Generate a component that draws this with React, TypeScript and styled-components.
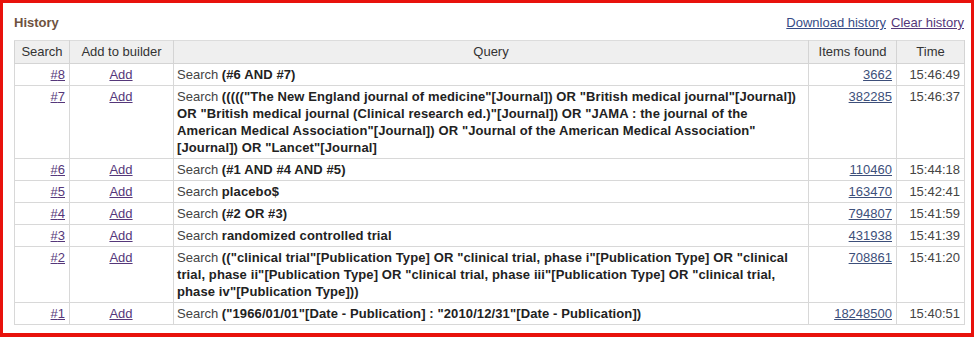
import React from "react";
import styled, { createGlobalStyle } from "styled-components";

const Global = createGlobalStyle`
  html, body { margin: 0; padding: 0; background: #fff; }
  body { font-family: Arial, "Liberation Sans", sans-serif; }
`;

const Frame = styled.div`
  box-sizing: border-box;
  width: 974px;
  height: 337px;
  border: 3px solid #e8120c;
  border-bottom-width: 4px;
  padding: 9px 7px 0 11px;
  background: #fff;
`;

const TitleBar = styled.div`
  display: flex;
  justify-content: space-between;
  align-items: baseline;
  height: 26px;
  padding-top: 2px;
  box-sizing: border-box;
  font-size: 13px;
  line-height: 17px;
  margin-bottom: 2px;
`;

const Title = styled.div`
  font-weight: bold;
  color: #6e5240;
`;

const Actions = styled.div`
  display: flex;
  gap: 5px;
`;

const Link = styled.a<{ $tone?: "blue" | "purple" | "slate" }>`
  color: ${(p) =>
    p.$tone === "purple" ? "#55377a" : p.$tone === "slate" ? "#3d4f7a" : "#364b86"};
  text-decoration: underline;
  cursor: pointer;
`;

const Table = styled.table`
  width: 950px;
  border-collapse: collapse;
  table-layout: fixed;
  font-size: 13px;
  line-height: 17px;
  color: #333;
  border: 1px solid #d4d4d4;
`;

const HeadCell = styled.th`
  background: #efefef;
  font-weight: normal;
  color: #333;
  text-align: center;
  padding: 2px 3px 3px;
  border: 1px solid #d4d4d4;
  border-top: 1px solid #dcdcdc;
`;

const Cell = styled.td<{ $align?: "left" | "right" | "center" }>`
  text-align: ${(p) => p.$align ?? "left"};
  vertical-align: top;
  padding: 2px 4px 2px 3px;
  border: 1px solid #d8d8d8;
  color: #444;
`;

const Term = styled.b`
  color: #222;
  letter-spacing: 0.11px;
`;

type Row = { n: number; query: string; found: string; time: string };

const rows: Row[] = [
  { n: 8, query: "(#6 AND #7)", found: "3662", time: "15:46:49" },
  {
    n: 7,
    query:
      '((((("The New England journal of medicine"[Journal]) OR "British medical journal"[Journal]) OR "British medical journal (Clinical research ed.)"[Journal]) OR "JAMA : the journal of the American Medical Association"[Journal]) OR "Journal of the American Medical Association" [Journal]) OR "Lancet"[Journal]',
    found: "382285",
    time: "15:46:37",
  },
  { n: 6, query: "(#1 AND #4 AND #5)", found: "110460", time: "15:44:18" },
  { n: 5, query: "placebo$", found: "163470", time: "15:42:41" },
  { n: 4, query: "(#2 OR #3)", found: "794807", time: "15:41:59" },
  { n: 3, query: "randomized controlled trial", found: "431938", time: "15:41:39" },
  {
    n: 2,
    query:
      '(("clinical trial"[Publication Type] OR "clinical trial, phase i"[Publication Type] OR "clinical trial, phase ii"[Publication Type] OR "clinical trial, phase iii"[Publication Type] OR "clinical trial, phase iv"[Publication Type]))',
    found: "708861",
    time: "15:41:20",
  },
  {
    n: 1,
    query: '("1966/01/01"[Date - Publication] : "2010/12/31"[Date - Publication])',
    found: "18248500",
    time: "15:40:51",
  },
];

export default function App() {
  return (
    <>
      <Global />
      <Frame>
        <TitleBar>
          <Title>History</Title>
          <Actions>
            <Link $tone="blue">Download history</Link>
            <Link $tone="purple">Clear history</Link>
          </Actions>
        </TitleBar>
        <Table>
          <colgroup>
            <col style={{ width: 55 }} />
            <col style={{ width: 104 }} />
            <col style={{ width: 635 }} />
            <col style={{ width: 88 }} />
            <col style={{ width: 68 }} />
          </colgroup>
          <thead>
            <tr>
              <HeadCell>Search</HeadCell>
              <HeadCell>Add to builder</HeadCell>
              <HeadCell>Query</HeadCell>
              <HeadCell>Items found</HeadCell>
              <HeadCell>Time</HeadCell>
            </tr>
          </thead>
          <tbody>
            {rows.map((r) => (
              <tr key={r.n}>
                <Cell $align="right">
                  <Link $tone="purple">#{r.n}</Link>
                </Cell>
                <Cell $align="center">
                  <Link $tone="purple">Add</Link>
                </Cell>
                <Cell>
                  Search <Term>{r.query}</Term>
                </Cell>
                <Cell $align="right">
                  <Link $tone="slate">{r.found}</Link>
                </Cell>
                <Cell $align="right">{r.time}</Cell>
              </tr>
            ))}
          </tbody>
        </Table>
      </Frame>
    </>
  );
}
